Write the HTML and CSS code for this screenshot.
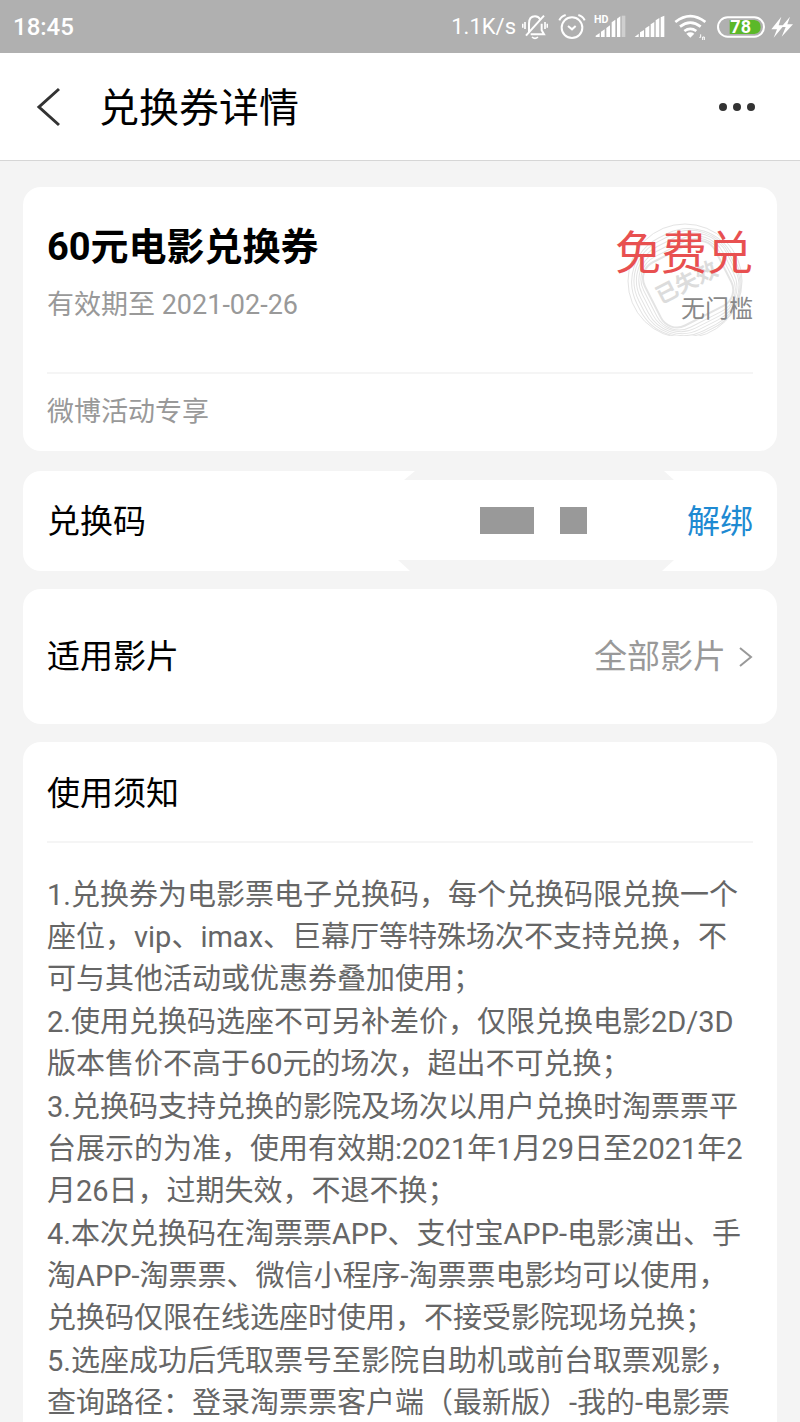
FILE: index.html
```html
<!DOCTYPE html>
<html lang="zh-CN">
<head>
    <meta charset="UTF-8">
    <meta name="viewport" content="width=device-width, initial-scale=1.0">
    <title>兑换券详情</title>
    <link rel="stylesheet" href="styles.css">
</head>
<body>
    <div class="status-bar">
        <span class="time">18:45</span>
        <div class="status-icons">
            <span class="speed">1.1K/s</span>
            <!-- muted bell -->
            <svg width="26" height="27" viewBox="0 0 78 81" fill="none" stroke="#fff" stroke-width="6">
                <path d="M21 58V32C21 18 28 10 39 10C46 10 52 14 55 20M59 32V52L66 64H26"/>
                <path d="M12 68L66 8"/>
                <path d="M30 72Q39 80 48 72M2 32V44M9 27V48M69 27V48M76 32V44" stroke-width="5"/>
            </svg>
            <!-- alarm clock -->
            <svg class="alarm" width="28" height="27" viewBox="0 0 84 81" fill="none" stroke="#fff" stroke-width="6">
                <circle cx="42" cy="44" r="31"/>
                <path d="M30 39L42 49L53 39M4 22Q9 10 23 6M61 6Q75 10 80 22"/>
            </svg>
            <svg class="signal" width="32" height="27" viewBox="0 0 96 81" fill="#fff">
                <text class="hd" x="0" y="31">HD</text>
                <path d="M5 72V68L17 60V72zM21 56L32 49V72H21zM37 45L48 37V72H37zM53 28L64 20V72H53zM69 17L79 10V72H69z"/>
                <path d="M83 8H94V72H83z" opacity=".4"/>
            </svg>
            <svg class="signal" width="32" height="27" viewBox="0 0 96 81" fill="#fff">
                <path d="M2 72L14 62V72zM18 58L30 51V72H18zM34 46L46 38V72H34zM50 34L61 27V72H50zM65 22L76 15V72H65zM80 13L91 8V72H80z"/>
            </svg>
            <svg class="wifi" width="32" height="27" viewBox="0 0 96 81" fill="none" stroke="#fff" stroke-width="8">
                <path d="M4 27Q49 -8 94 27M18 41Q49 17 80 41M31 54Q49 41 67 54"/>
                <path d="M37 62Q49 54 61 62L49 74z" fill="#fff" stroke="none"/>
                <path d="M76 73H80V64M91 72V81M86 81V72H91" stroke-width="3"/>
            </svg>
            <svg class="battery" width="48" height="22" viewBox="0 0 144 66">
                <rect x="3" y="4" width="138" height="58" rx="29" fill="none" stroke="#fff" stroke-width="6"/>
                <path d="M38 12H112Q131 14 131 33T112 54H38z" fill="#5bb829"/>
                <text class="battery-level" x="71" y="52" text-anchor="middle">78</text>
            </svg>
            <svg class="bolt" width="22" height="24" viewBox="0 0 66 72" fill="#fff">
                <path d="M31 5L1 43H18L8 68L39 31H23zM57 5L31 36H44L32 65L66 28H49z"/>
            </svg>
        </div>
    </div>

    <header class="header">
        <button class="icon-btn" type="button" aria-label="返回">
            <svg width="25" height="40" viewBox="0 0 25 40" fill="none" stroke="#333" stroke-width="3">
                <path d="M23 2L3 20L23 38"/>
            </svg>
        </button>
        <h1>兑换券详情</h1>
        <button class="icon-btn" type="button" aria-label="更多">
            <svg width="36" height="8" viewBox="0 0 36 8" fill="#333">
                <circle cx="4" cy="4" r="4"/>
                <circle cx="18" cy="4" r="4"/>
                <circle cx="32" cy="4" r="4"/>
            </svg>
        </button>
    </header>

    <main class="content">
        <section class="card coupon">
            <div class="coupon-top">
                <div>
                    <h2>60元电影兑换券</h2>
                    <p class="expire">有效期至 2021-02-26</p>
                </div>
                <div class="price">
                    <svg class="stamp" width="118" height="114" viewBox="0 0 118 114" fill="none" stroke="#e4e4e4">
                        <circle cx="58" cy="59" r="57"/>
                        <g transform="rotate(-27 60 61)">
                            <rect x="6" y="8" width="107" height="105" rx="49"/>
                            <rect x="9" y="11" width="102" height="100" rx="44"/>
                            <rect x="12" y="15" width="97" height="93" rx="38"/>
                            <rect x="15" y="19" width="91" height="86" rx="32"/>
                            <rect x="18" y="23" width="85" height="79" rx="25"/>
                            <rect x="21" y="27" width="79" height="71" rx="18" stroke-width="2"/>
                            <text class="stamp-text" x="60" y="68" text-anchor="middle">已失效</text>
                        </g>
                    </svg>
                    <strong>免费兑</strong>
                    <span>无门槛</span>
                </div>
            </div>
            <p class="source">微博活动专享</p>
        </section>

        <section class="card row code-row">
            <h3>兑换码</h3>
            <!-- hidden code -->
            <svg class="code-mask" width="280" height="100" viewBox="0 0 280 100">
                <path d="M17 0H266L276 9H6zM0 89H276L264 100H12z" fill="#f4f4f4"/>
                <path d="M82 36H136V63H82zM162 36H189V63H162z" fill="#999"/>
            </svg>
            <button class="unbind" type="button">解绑</button>
        </section>

        <section class="card row film-row">
            <h3>适用影片</h3>
            <a href="#">
                <span>全部影片</span>
                <svg width="14" height="20" viewBox="0 0 14 20" fill="none" stroke="#999" stroke-width="2">
                    <path d="M1 1L12 10L1 19"/>
                </svg>
            </a>
        </section>

        <section class="card notice">
            <h3>使用须知</h3>
            <div class="notice-text">
                <p>1.兑换券为电影票电子兑换码，每个兑换码限兑换一个座位，vip、imax、巨幕厅等特殊场次不支持兑换，不可与其他活动或优惠券叠加使用；</p>
                <p>2.使用兑换码选座不可另补差价，仅限兑换电影2D/3D版本售价不高于60元的场次，超出不可兑换；</p>
                <p>3.兑换码支持兑换的影院及场次以用户兑换时淘票票平台展示的为准，使用有效期:2021年1月29日至2021年2月26日，过期失效，不退不换；</p>
                <p>4.本次兑换码在淘票票APP、支付宝APP-电影演出、手淘APP-淘票票、微信小程序-淘票票电影均可以使用，兑换码仅限在线选座时使用，不接受影院现场兑换；</p>
                <p>5.选座成功后凭取票号至影院自助机或前台取票观影，查询路径：登录淘票票客户端（最新版）-我的-电影票</p>
            </div>
        </section>
    </main>
</body>
</html>
```

FILE: styles.css
```css
* {
    box-sizing: border-box;
}
body {
    margin: 0;
    font-family: Roboto, "Noto Sans CJK SC", sans-serif;
    background-color: #f4f4f4;
    color: #000;
}
h1, h2, h3, p {
    margin: 0;
    font-weight: normal;
}
button {
    padding: 0;
    border: none;
    background: none;
    font-family: inherit;
    cursor: pointer;
}
svg {
    display: block;
    flex-shrink: 0;
}

/* status bar */
.status-bar {
    display: flex;
    justify-content: space-between;
    align-items: center;
    height: 53px;
    padding: 0 7px 0 13px;
    background-color: #b0b0b0;
    color: #fff;
    font-size: 24px;
    font-weight: 500;
}
.status-icons {
    display: flex;
    align-items: center;
    gap: 6px;
}
.speed {
    font-size: 22px;
    font-weight: normal;
}
.alarm {
    margin-left: 4px;
}
.signal, .wifi {
    margin-left: 2px;
}
.battery {
    margin-left: 5px;
}
.battery-level {
    font-size: 54px;
    font-weight: bold;
    fill: #fff;
}
.hd {
    font-size: 32px;
    font-weight: bold;
}

/* title bar */
.header {
    display: flex;
    align-items: center;
    height: 108px;
    padding: 0 45px 0 36px;
    background-color: #fff;
    border-bottom: 1px solid #d6d6d6;
}
.header h1 {
    flex: 1;
    margin-left: 38px;
    padding-bottom: 4px;
    font-size: 40px;
}

/* cards */
.content {
    display: flex;
    flex-direction: column;
    gap: 18px;
    padding: 26px 23px 0;
}
.card {
    padding: 0 24px;
    background-color: #fff;
    border-radius: 18px;
}
.card h3 {
    font-size: 33px;
}
.coupon {
    margin-bottom: 2px;
    padding-bottom: 1px;
}
.coupon-top {
    display: flex;
    justify-content: space-between;
    height: 187px;
    padding-top: 35px;
    border-bottom: 2px solid #f5f5f5;
}
.coupon h2 {
    font-size: 38px;
    font-weight: bold;
    line-height: 50px;
}
.expire, .source {
    color: #999;
    font-size: 27px;
}
.expire {
    margin-top: 13px;
    line-height: 40px;
}
.source {
    line-height: 76px;
}
.price {
    position: relative;
    display: flex;
    flex-direction: column;
    align-items: flex-end;
}
.price strong {
    position: relative;
    color: #e85050;
    font-size: 46px;
    font-weight: normal;
    line-height: 62px;
}
.price span {
    position: relative;
    color: #888;
    font-size: 24px;
    line-height: 50px;
}
.stamp {
    position: absolute;
    top: 0;
    right: 8px;
}
.stamp-text {
    font-size: 22px;
    font-weight: bold;
    fill: #dcdcdc;
    stroke: none;
}
.row {
    display: flex;
    justify-content: space-between;
    align-items: center;
}
.row h3, .unbind, .film-row span {
    padding-bottom: 5px;
}
.code-row {
    height: 100px;
}
.code-mask {
    margin-left: auto;
    margin-right: 9px;
}
.unbind {
    color: #1e8ad2;
    font-size: 33px;
}
.film-row {
    height: 135px;
}
.film-row a {
    display: flex;
    align-items: center;
    gap: 13px;
    color: #999;
    font-size: 33px;
    text-decoration: none;
}
.notice {
    border-radius: 18px 18px 0 0;
}
.notice h3 {
    padding-top: 4px;
    line-height: 95px;
    border-bottom: 2px solid #f5f5f5;
}
.notice-text {
    display: flex;
    flex-direction: column;
    gap: 1px;
    padding: 31px 6px 0 0;
    color: #666;
    font-size: 29px;
    line-height: 42px;
}
```
